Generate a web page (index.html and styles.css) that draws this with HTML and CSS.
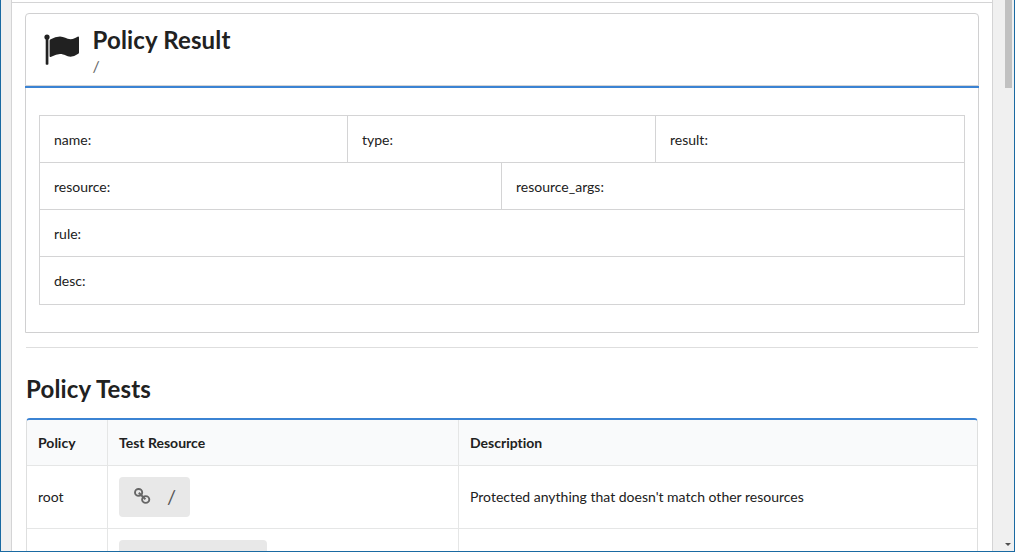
FILE: index.html
```html
<!DOCTYPE html>
<html lang="en">
<head>
<meta charset="utf-8">
<title>Policy Result</title>
<link rel="stylesheet" href="styles.css">
</head>
<body>
<div class="window">
  <main class="page">
    <div class="top-line"></div>
    <section class="card">
      <header class="card-header">
        <svg class="flag" viewBox="0 0 36 32" width="36" height="32">
          <circle cx="3" cy="3" r="2.6"/>
          <path d="M1.700 3h2.700v27q0 .8-.8.8h-1.100q-.8 0-.8-.8z"/>
          <path d="M5.600 6.700Q5.600 6 6.200 5.500Q11.500 2.500 16 2.500C20 2.500 22.500 5.200 26.500 5.200C29.500 5.200 32 3.500 33.500 2.800Q35 2.200 35 3.500V18.500Q35 19.300 34.300 19.700Q30 22.700 26.500 22.700C22.500 22.700 20.500 20 16 20Q12.500 20 7.200 22.800Q5.600 23.500 5.600 22Z"/>
        </svg>
        <div>
          <h2>Policy Result</h2>
          <p class="subtitle">/</p>
        </div>
      </header>
      <div class="fields">
        <div class="row thirds"><div>name:</div><div>type:</div><div>result:</div></div>
        <div class="row halves"><div>resource:</div><div>resource_args:</div></div>
        <div class="row"><div>rule:</div></div>
        <div class="row"><div>desc:</div></div>
      </div>
    </section>
    <hr class="divider">
    <h2 class="tests-title">Policy Tests</h2>
    <div class="tests">
      <div class="test-row head"><div>Policy</div><div>Test Resource</div><div>Description</div></div>
      <div class="test-row">
        <div>root</div>
        <div>
          <a class="button">
            <svg class="link" viewBox="0 0 18 18" width="18" height="18">
              <ellipse cx="5.600" cy="5.400" rx="3.600" ry="3.400"/>
              <ellipse cx="12.700" cy="12.500" rx="3.600" ry="3.400"/>
              <path d="M5.800 5.800l6.600 6.400"/>
            </svg>
            <span>/</span>
          </a>
        </div>
        <div>Protected anything that doesn't match other resources</div>
      </div>
      <div class="test-row">
        <div></div>
        <div><a class="button wide"></a></div>
        <div></div>
      </div>
    </div>
  </main>
  <div class="scrollbar"><div class="thumb"></div><i class="arrow"></i></div>
</div>
</body>
</html>
```
FILE: styles.css
```css
* { box-sizing: border-box; }
body {
  margin: 0;
  font: 14px/20px Lato, "Liberation Sans", sans-serif;
  font-variant-ligatures: none;
  color: #212121;
  overflow: hidden;
}
h2 { margin: 0; font-size: 24px; line-height: 30px; font-weight: 700; letter-spacing: .15px; }
.window {
  height: 552px;
  display: flex;
  overflow: hidden;
  background: #f0f0f0;
  border: 1px solid #1a6aa2;
  border-top: 0;
  padding-left: 10px;
}
.page {
  width: 982px;
  flex: none;
  height: 551px;
  overflow: hidden;
  background: #fff;
  border: solid #d4d4d5;
  border-width: 0 1px;
}
.top-line { height: 3px; border-bottom: 1px solid #d4d4d5; }
.card {
  margin: 10px 13px 0;
  height: 320px;
  border: 1px solid #d0d0d1;
  border-radius: 4px 4px 0 0;
}
.card-header {
  height: 74px;
  margin: 0 -1px;
  padding: 11px 0 0 19px;
  display: flex;
  gap: 12.500px;
  border-bottom: 2px solid #3b83d3;
  box-shadow: inset 0 -1px #d4d4d5;
}
.flag { margin-top: 9px; fill: #212121; }
.subtitle { margin: 1px 0 0; font-size: 16px; line-height: 20px; color: #666; }
.fields { margin: 27px 13px 0; border: 1px solid #d4d4d5; height: 190px; }
.row { display: grid; height: 47px; border-bottom: 1px solid #d4d4d5; }
.thirds { grid-template-columns: 307px 308px 1fr; }
.halves { grid-template-columns: 461px 1fr; }
.row:last-child { border-bottom: 0; }
.row > div { padding: 13px 14px; line-height: 21px; }
.row > div + div { border-left: 1px solid #d4d4d5; }
.divider { margin: 14px 14px 0; border: 0; height: 1px; background: #dedede; }
.tests-title { margin: 26px 14px 14px; }
.tests {
  margin: 0 14px;
  border: 1px solid #dedfdf;
  border-top: 2px solid #3b83d3;
  border-radius: 4px 4px 0 0;
  overflow: hidden;
}
.test-row {
  display: grid;
  grid-template-columns: 80px 351px 1fr;
  height: 63px;
  border-bottom: 1px solid #e5e6e6;
}
.test-row > div { padding-left: 11px; display: flex; align-items: center; }
.test-row > div + div { border-left: 1px solid #e5e6e6; }
.head { height: 46px; background: #f9fafb; font-weight: 700; }
.button {
  width: 71px;
  height: 40px;
  padding: 0 0 2px 14px;
  display: flex;
  align-items: center;
  gap: 16px;
  background: #e8e8e8;
  border-radius: 4px;
  color: #555;
  font-size: 20px;
}
.wide { width: 148px; }
.link { fill: none; stroke: #666; stroke-width: 1.9; }
.scrollbar { flex: 1; position: relative; }
.thumb { width: 7px; height: 88px; margin-left: 12px; background: #c1c1c1; }
.arrow {
  position: absolute;
  right: 3px;
  bottom: 5px;
  border: solid transparent;
  border-width: 3px 3px 0;
  border-top-color: #505050;
}
```
